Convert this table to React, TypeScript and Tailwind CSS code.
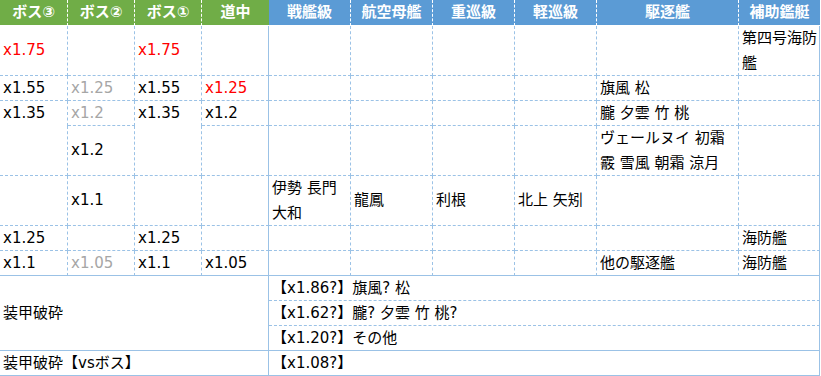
import React from "react";

const colStart = ["", "col-start-1", "col-start-2", "col-start-3", "col-start-4", "col-start-5", "col-start-6", "col-start-7", "col-start-8", "col-start-9", "col-start-10"];
const rowStart = ["", "row-start-1", "row-start-2", "row-start-3", "row-start-4", "row-start-5", "row-start-6", "row-start-7", "row-start-8", "row-start-9", "row-start-10", "row-start-11", "row-start-12"];
const colSpan = ["", "col-span-1", "col-span-2", "col-span-3", "col-span-4", "col-span-5", "col-span-6"];
const rowSpan = ["", "row-span-1", "row-span-2", "row-span-3"];

type Sty = "dashed" | "solid" | "none";

const rightCls: Record<Sty, string> = {
  dashed: "border-r [border-right-style:dashed]",
  solid: "border-r",
  none: "",
};
const bottomCls: Record<Sty, string> = {
  dashed: "border-b [border-bottom-style:dashed]",
  solid: "border-b",
  none: "",
};

type Color = "k" | "r" | "g";
const colorCls: Record<Color, string> = {
  k: "text-black",
  r: "text-[#ff0000]",
  g: "text-[#a6a6a6]",
};

function Cell({
  c,
  r,
  cs = 1,
  rs = 1,
  t = "",
  color = "k",
  rb = "dashed",
  bb = "dashed",
}: {
  c: number;
  r: number;
  cs?: number;
  rs?: number;
  t?: string;
  color?: Color;
  rb?: Sty;
  bb?: Sty;
}) {
  return (
    <div
      className={`${colStart[c]} ${rowStart[r]} ${colSpan[cs]} ${rowSpan[rs]} ${rightCls[rb]} ${bottomCls[bb]} border-[#9bc2e6] ${colorCls[color]} flex items-center pl-[3px] leading-[25px] whitespace-pre-line overflow-visible`}
    >
      <span>{t}</span>
    </div>
  );
}

type Entry = string | { t: string; color: Color };

const body: Entry[][] = [
  [{ t: "x1.75", color: "r" }, "", { t: "x1.75", color: "r" }, "", "", "", "", "", "", "第四号海防\n艦"],
  ["x1.55", { t: "x1.25", color: "g" }, "x1.55", { t: "x1.25", color: "r" }, "", "", "", "", "旗風 松", ""],
  ["x1.35", { t: "x1.2", color: "g" }, "x1.35", "x1.2", "", "", "", "", "朧 夕雲 竹 桃", ""],
  ["", "x1.2", "", "", "", "", "", "", "ヴェールヌイ 初霜\n霰 雪風 朝霜 涼月", ""],
  ["", "x1.1", "", "", "伊勢 長門\n大和", "龍鳳", "利根", "北上 矢矧", "", ""],
  ["x1.25", "", "x1.25", "", "", "", "", "", "", "海防艦"],
  ["x1.1", { t: "x1.05", color: "g" }, "x1.1", "x1.05", "", "", "", "", "他の駆逐艦", "海防艦"],
];

const headers: { t: string; bg: string; rb: boolean }[] = [
  { t: "ボス③", bg: "bg-[#70ad47]", rb: true },
  { t: "ボス②", bg: "bg-[#70ad47]", rb: true },
  { t: "ボス①", bg: "bg-[#70ad47]", rb: true },
  { t: "道中", bg: "bg-[#70ad47]", rb: false },
  { t: "戦艦級", bg: "bg-[#5b9bd5]", rb: true },
  { t: "航空母艦", bg: "bg-[#5b9bd5]", rb: true },
  { t: "重巡級", bg: "bg-[#5b9bd5]", rb: true },
  { t: "軽巡級", bg: "bg-[#5b9bd5]", rb: true },
  { t: "駆逐艦", bg: "bg-[#5b9bd5]", rb: true },
  { t: "補助鑑艇", bg: "bg-[#5b9bd5]", rb: false },
];

export default function App() {
  return (
    <div className="w-[821px] h-[376px] bg-white overflow-hidden">
      <div className="grid w-[820px] grid-cols-[68px_67px_67px_67px_82px_82px_82px_82px_142px_81px] grid-rows-[26px_50px_25px_25px_50px_50px_25px_25px_25px_25px_25px_25px] font-['DejaVu_Sans','Noto_Sans_CJK_JP',sans-serif] text-[15px]">
        {headers.map((h, i) => (
          <div
            key={"h" + i}
            className={`${colStart[i + 1]} row-start-1 ${h.bg} ${h.rb ? "border-r [border-right-style:dashed]" : ""} border-b border-white flex items-center justify-center font-bold text-white leading-[25px]`}
          >
            {h.t}
          </div>
        ))}
        {body.map((row, ri) =>
          row.map((e, ci) => {
            const c = ci + 1;
            const r = ri + 2;
            const t = typeof e === "string" ? e : e.t;
            const color: Color = typeof e === "string" ? "k" : e.color;
            const rb: Sty = c === 4 || c === 10 ? "solid" : "dashed";
            let bb: Sty = r === 8 ? "solid" : "dashed";
            if (r === 4 && (c === 1 || c === 3)) bb = "none";
            return <Cell key={`${r}-${c}`} c={c} r={r} t={t} color={color} rb={rb} bb={bb} />;
          })
        )}
        <Cell c={1} r={9} cs={4} rs={3} t="装甲破砕" rb="solid" bb="solid" />
        <Cell c={5} r={9} cs={6} t="【x1.86?】旗風? 松" rb="solid" bb="dashed" />
        <Cell c={5} r={10} cs={6} t="【x1.62?】朧? 夕雲 竹 桃?" rb="solid" bb="dashed" />
        <Cell c={5} r={11} cs={6} t="【x1.20?】その他" rb="solid" bb="solid" />
        <Cell c={1} r={12} cs={4} t="装甲破砕【vsボス】" rb="solid" bb="solid" />
        <Cell c={5} r={12} cs={6} t="【x1.08?】" rb="solid" bb="solid" />
      </div>
    </div>
  );
}
